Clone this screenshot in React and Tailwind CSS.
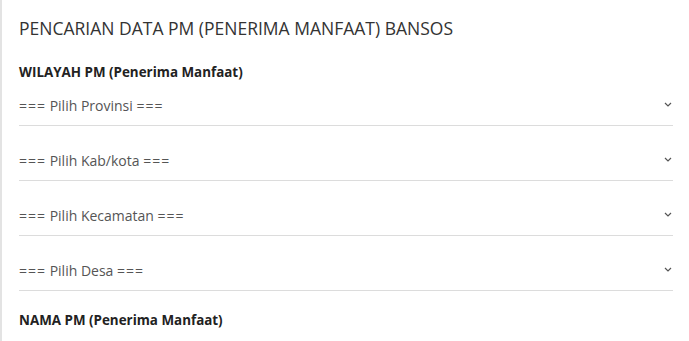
import React from "react";

const pilihan = ["Provinsi", "Kab/kota", "Kecamatan", "Desa"];

function Chevron() {
  return (
    <svg width="8" height="5" viewBox="0 0 8 5" className="shrink-0 text-[#555]">
      <path d="M1 1l3 3 3-3" fill="none" stroke="currentColor" strokeWidth="1.2" />
    </svg>
  );
}

export default function App() {
  return (
    <div
      className="min-h-[341px] w-[689px] bg-white border-l-2 border-[#e3e3e3] pl-[17px] pr-4"
      style={{ fontFamily: '"Open Sans", sans-serif' }}
    >
      <h3 className="pt-[15px] text-[17.5px] leading-[26px] text-[#333] font-normal">
        PENCARIAN DATA PM (PENERIMA MANFAAT) BANSOS
      </h3>
      <h5 className="mt-[22px] text-[13.4px] leading-[18px] font-bold text-[#222]">
        WILAYAH PM (Penerima Manfaat)
      </h5>
      <div className="flex flex-col">
        {pilihan.map((p) => (
          <div
            key={p}
            className="flex items-end justify-between pb-[10px] border-b border-[#dcdcdc] h-[55px] first:h-[45px]"
          >
            <span className="text-[14px] leading-[18px] text-[#555]">
              <span className="tracking-[1px]">===</span> Pilih {p}{" "}
              <span className="tracking-[1px]">===</span>
            </span>
            <span className="pb-[8px] pr-[1px]">
              <Chevron />
            </span>
          </div>
        ))}
      </div>
      <h5 className="mt-[20px] text-[13.4px] leading-[18px] font-bold text-[#222]">
        NAMA PM (Penerima Manfaat)
      </h5>
    </div>
  );
}
